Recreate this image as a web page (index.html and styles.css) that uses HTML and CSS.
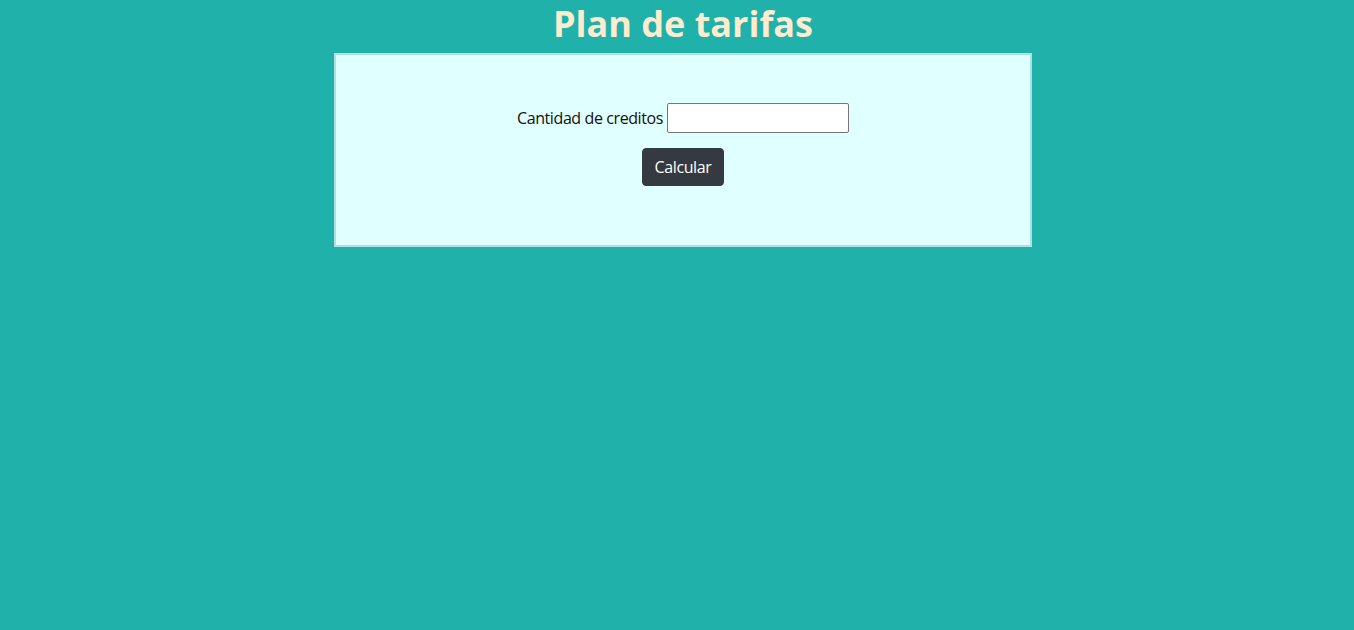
FILE: index.html
```html
<!DOCTYPE html>
<html lang="es">
<head>
<meta charset="utf-8">
<title>Plan de tarifas</title>
<link rel="stylesheet" href="styles.css">
</head>
<body>
<main class="page">
  <h1 class="title">Plan de tarifas</h1>
  <div class="card">
    <form class="form">
      <div class="row">
        <label class="label" for="creditos">Cantidad de creditos</label>
        <input class="input" id="creditos" type="text">
      </div>
      <button class="btn" type="button">Calcular</button>
    </form>
  </div>
</main>
</body>
</html>
```
FILE: styles.css
```css
html, body {
  margin: 0;
  padding: 0;
}
body {
  background: #20b2aa;
  font-family: "Open Sans", "Noto Sans", sans-serif;
  font-size: 16px;
  color: #212529;
  min-height: 630px;
}
.page {
  padding-left: 12px;
}
.title {
  margin: 0 0 5px;
  text-align: center;
  font-size: 36px;
  font-weight: 700;
  line-height: 48px;
  color: #ffebcd;
}
.card {
  width: 694px;
  height: 190px;
  margin: 0 auto;
  box-sizing: content-box;
  background: #e0ffff;
  border: 2px solid #b0e0e6;
}
.form {
  padding-top: 48px;
  display: flex;
  flex-direction: column;
  align-items: center;
}
.row {
  display: flex;
  align-items: center;
  gap: 4px;
  height: 30px;
}
.label {
  color: #111;
  letter-spacing: -0.4px;
}
.input {
  width: 182px;
  height: 30px;
  box-sizing: border-box;
  border: 1px solid #767676;
  border-radius: 2px;
  background: #fff;
  padding: 1px 2px;
  font: inherit;
}
.btn {
  margin-top: 15px;
  height: 38px;
  padding: 6px 12px;
  border: 1px solid #343a40;
  border-radius: 4px;
  background: #343a40;
  color: #fff;
  font: inherit;
  letter-spacing: -0.4px;
  line-height: 24px;
}
```
